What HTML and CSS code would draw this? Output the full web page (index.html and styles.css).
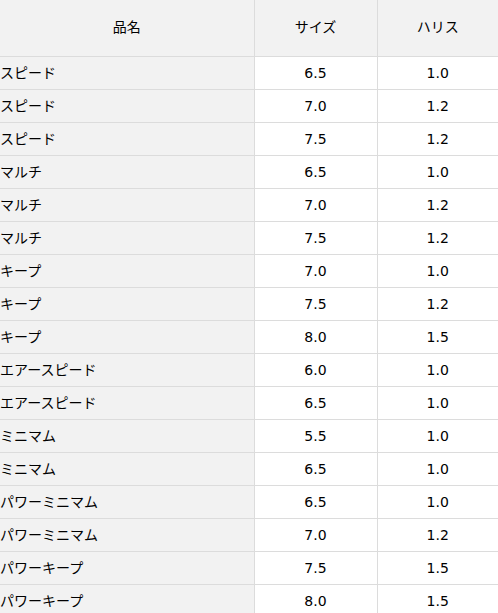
FILE: index.html
```html
<!DOCTYPE html>
<html lang="ja">
<head>
<meta charset="utf-8">
<link rel="stylesheet" href="styles.css">
</head>
<body>
<table class="spec">
  <colgroup><col class="c1"><col class="c2"><col class="c3"></colgroup>
  <thead>
    <tr><th>品名</th><th>サイズ</th><th>ハリス</th></tr>
  </thead>
  <tbody>
    <tr><td class="name">スピード</td><td>6.5</td><td>1.0</td></tr>
    <tr><td class="name">スピード</td><td>7.0</td><td>1.2</td></tr>
    <tr><td class="name">スピード</td><td>7.5</td><td>1.2</td></tr>
    <tr><td class="name">マルチ</td><td>6.5</td><td>1.0</td></tr>
    <tr><td class="name">マルチ</td><td>7.0</td><td>1.2</td></tr>
    <tr><td class="name">マルチ</td><td>7.5</td><td>1.2</td></tr>
    <tr><td class="name">キープ</td><td>7.0</td><td>1.0</td></tr>
    <tr><td class="name">キープ</td><td>7.5</td><td>1.2</td></tr>
    <tr><td class="name">キープ</td><td>8.0</td><td>1.5</td></tr>
    <tr><td class="name">エアースピード</td><td>6.0</td><td>1.0</td></tr>
    <tr><td class="name">エアースピード</td><td>6.5</td><td>1.0</td></tr>
    <tr><td class="name">ミニマム</td><td>5.5</td><td>1.0</td></tr>
    <tr><td class="name">ミニマム</td><td>6.5</td><td>1.0</td></tr>
    <tr><td class="name">パワーミニマム</td><td>6.5</td><td>1.0</td></tr>
    <tr><td class="name">パワーミニマム</td><td>7.0</td><td>1.2</td></tr>
    <tr><td class="name">パワーキープ</td><td>7.5</td><td>1.5</td></tr>
    <tr><td class="name">パワーキープ</td><td>8.0</td><td>1.5</td></tr>
  </tbody>
</table>
</body>
</html>
```
FILE: styles.css
```css
html, body {
  margin: 0;
  padding: 0;
  background: #fff;
}
body {
  font-family: "Noto Sans CJK JP", "Noto Sans", sans-serif;
  font-size: 14px;
  color: #000;
}
.spec {
  border-collapse: collapse;
  table-layout: fixed;
  width: 498px;
}
.c1 { width: 254px; }
.c2 { width: 123px; }
.c3 { width: 121px; }
.spec th,
.spec td {
  border: 1px solid #dcdcdc;
  text-align: center;
  line-height: 20px;
  padding: 6px 0;
  font-weight: normal;
  white-space: nowrap;
  overflow: hidden;
}
.spec td {
  font-family: "DejaVu Sans", "Noto Sans CJK JP", sans-serif;
}
.spec th {
  background: #f2f2f2;
  padding: 16px 0 20px;
  border-top: none;
}
.spec th:first-child,
.spec td:first-child {
  border-left: none;
}
.spec th:last-child,
.spec td:last-child {
  border-right: none;
}
.spec td.name {
  background: #f2f2f2;
  text-align: left;
  padding: 5px 0 7px;
  font-family: "Noto Sans CJK JP", "Noto Sans", sans-serif;
}
```
